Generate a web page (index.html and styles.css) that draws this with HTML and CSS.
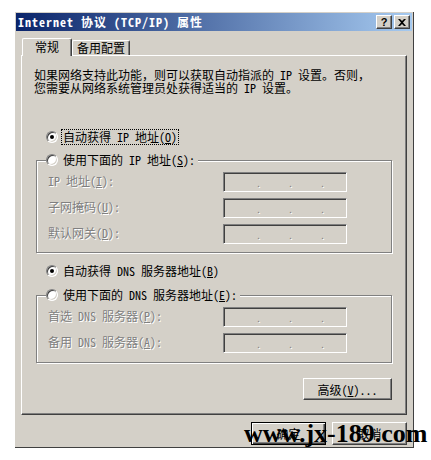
FILE: index.html
```html
<!DOCTYPE html>
<html lang="zh-CN">
<head>
<meta charset="UTF-8">
<title>Internet 协议 (TCP/IP) 属性</title>
<link rel="stylesheet" href="styles.css">
</head>
<body>

<div class="window">
    <div class="titlebar">
        <span class="title">Internet 协议 (TCP/IP) 属性</span>
        <div class="caption-btns">
            <span class="cbtn">?</span>
            <span class="cbtn">
                <svg width="8" height="7" viewBox="0 0 8 7"><path d="M0 0h2l2 2 2-2h2L5 3.5 8 7H6L4 5 2 7H0l3-3.5z" fill="#000"/></svg>
            </span>
        </div>
    </div>

    <div class="body">
        <div class="tabs">
            <div class="tab active">常规</div>
            <div class="tab">备用配置</div>
        </div>

        <div class="panel">
            <p class="intro">如果网络支持此功能，则可以获取自动指派的 IP 设置。否则，<br>您需要从网络系统管理员处获得适当的 IP 设置。</p>

            <div class="radio-row first">
                <span class="radio on"></span>
                <span class="rlabel focus">自动获得 IP 地址(<u>O</u>)</span>
            </div>

            <fieldset class="group g1">
                <legend>
                    <span class="radio"></span>
                    <span class="rlabel">使用下面的 IP 地址(<u>S</u>):</span>
                </legend>
                <div class="fields">
                    <span class="dlabel">IP 地址(<u>I</u>):</span>
                    <div class="ip"><span class="seg"></span><span class="dot">.</span><span class="seg"></span><span class="dot">.</span><span class="seg"></span><span class="dot">.</span></div>
                    <span class="dlabel">子网掩码(<u>U</u>):</span>
                    <div class="ip"><span class="seg"></span><span class="dot">.</span><span class="seg"></span><span class="dot">.</span><span class="seg"></span><span class="dot">.</span></div>
                    <span class="dlabel">默认网关(<u>D</u>):</span>
                    <div class="ip"><span class="seg"></span><span class="dot">.</span><span class="seg"></span><span class="dot">.</span><span class="seg"></span><span class="dot">.</span></div>
                </div>
            </fieldset>

            <div class="radio-row dns">
                <span class="radio on"></span>
                <span class="rlabel">自动获得 DNS 服务器地址(<u>B</u>)</span>
            </div>

            <fieldset class="group g2">
                <legend>
                    <span class="radio"></span>
                    <span class="rlabel">使用下面的 DNS 服务器地址(<u>E</u>):</span>
                </legend>
                <div class="fields">
                    <span class="dlabel">首选 DNS 服务器(<u>P</u>):</span>
                    <div class="ip"><span class="seg"></span><span class="dot">.</span><span class="seg"></span><span class="dot">.</span><span class="seg"></span><span class="dot">.</span></div>
                    <span class="dlabel">备用 DNS 服务器(<u>A</u>):</span>
                    <div class="ip"><span class="seg"></span><span class="dot">.</span><span class="seg"></span><span class="dot">.</span><span class="seg"></span><span class="dot">.</span></div>
                </div>
            </fieldset>

            <div class="adv-row">
                <button type="button" class="btn adv">高级(<u>V</u>)...</button>
            </div>
        </div>

        <div class="footer">
            <button type="button" class="btn default">确定</button>
            <button type="button" class="btn">取消</button>
        </div>
    </div>
</div>

<div class="watermark">www.jx-189.com</div>

</body>
</html>
```

FILE: styles.css
```css
body {
    margin: 0;
    background: #fff;
    font-family: "Noto Sans Mono CJK SC", "Noto Sans CJK SC", sans-serif;
    font-size: 12px;
    color: #000;
}
.window {
    box-sizing: border-box;
    width: 399px;
    height: 436px;
    margin: 12px 0 0 15px;
    padding: 1px;
    background: #d4d0c8;
    border-right: 1px solid #404040;
    border-bottom: 1px solid #404040;
}
.titlebar {
    display: flex;
    align-items: center;
    justify-content: space-between;
    height: 18px;
    padding: 0 2px;
    background: linear-gradient(to right, #0a246a, #a6caf0);
}
.title {
    color: #fff;
    font-weight: bold;
    letter-spacing: 1px;
    line-height: 18px;
    white-space: nowrap;
}
.caption-btns {
    display: flex;
    gap: 2px;
}
.cbtn {
    box-sizing: border-box;
    display: flex;
    align-items: center;
    justify-content: center;
    width: 16px;
    height: 14px;
    background: #d4d0c8;
    border: 1px solid;
    border-color: #fff #404040 #404040 #fff;
    box-shadow: inset -1px -1px 0 #808080;
    font-family: "Liberation Sans", sans-serif;
    font-weight: bold;
    font-size: 11px;
    line-height: 12px;
}
.body {
    padding: 7px 0 0 5px;
}
.tabs {
    display: flex;
    align-items: flex-end;
    height: 17px;
}
.tab {
    box-sizing: border-box;
    height: 15px;
    width: 58px;
    text-align: center;
    line-height: 14px;
    border: 1px solid;
    border-bottom: none;
    border-color: #fff #404040 #fff #fff;
    border-radius: 2px 2px 0 0;
    box-shadow: inset -1px 0 0 #808080;
    background: #d4d0c8;
}
.tab.active {
    position: relative;
    z-index: 1;
    width: 50px;
    height: 18px;
    margin: 0 0 -1px 1px;
    line-height: 16px;
}
.panel {
    box-sizing: border-box;
    width: 386px;
    height: 360px;
    padding: 12px 14px 0 12px;
    border: 1px solid;
    border-color: #fff #404040 #404040 #fff;
    box-shadow: inset -1px -1px 0 #808080;
}
.intro {
    margin: 0;
    line-height: 13px;
    white-space: nowrap;
}
.radio-row {
    display: flex;
    align-items: center;
    height: 16px;
    margin-left: 12px;
}
.radio-row.first {
    margin-top: 35px;
}
.radio-row.dns {
    margin-top: 10px;
}
.radio {
    box-sizing: border-box;
    position: relative;
    flex: none;
    width: 12px;
    height: 12px;
    border-radius: 50%;
    border: 1px solid;
    border-color: #808080 #fff #fff #808080;
    background: #fff;
    box-shadow: inset 1px 1px 0 #404040, inset -1px -1px 0 #d4d0c8;
}
.radio.on::after {
    content: "";
    position: absolute;
    left: 3px;
    top: 3px;
    width: 4px;
    height: 4px;
    border-radius: 50%;
    background: #000;
}
.rlabel {
    margin-left: 3px;
    padding: 0 1px;
    line-height: 14px;
    border: 1px solid transparent;
    white-space: nowrap;
}
.rlabel.focus {
    border: 1px dotted #000;
}
.group {
    box-sizing: border-box;
    width: 356px;
    margin: 7px 0 0 2px;
    padding: 4px 0 8px 11px;
    border: 1px solid #808080;
    box-shadow: 1px 1px 0 #fff, inset 1px 1px 0 #fff;
    min-width: 0;
}
.group.g2 {
    margin-top: 8px;
    padding-top: 4px;
    padding-bottom: 9px;
}
.group legend {
    display: flex;
    align-items: center;
    height: 16px;
    margin-left: -2px;
    padding: 0 2px 0 0;
    background: #d4d0c8;
}
.group legend .rlabel {
    padding: 0;
    margin-left: 4px;
}
.fields {
    display: grid;
    grid-template-columns: 175px 124px;
    row-gap: 6px;
    align-items: center;
}
.dlabel {
    margin-top: -3px;
    color: #808080;
    text-shadow: 1px 1px 0 #fff;
    white-space: nowrap;
}
.ip {
    box-sizing: border-box;
    display: flex;
    align-items: flex-end;
    height: 20px;
    padding-bottom: 2px;
    border: 1px solid;
    border-color: #808080 #fff #fff #808080;
    box-shadow: inset 1px 1px 0 #404040, inset -1px -1px 0 #d4d0c8;
    color: #808080;
    text-shadow: 1px 1px 0 #fff;
    font-size: 10px;
    line-height: 12px;
}
.seg {
    width: 32px;
}
.dot {
    width: 0;
    overflow: visible;
}
.adv-row {
    display: flex;
    justify-content: flex-end;
    margin-top: 15px;
}
.btn {
    box-sizing: border-box;
    width: 75px;
    height: 23px;
    padding: 0;
    background: #d4d0c8;
    border: 1px solid;
    border-color: #fff #404040 #404040 #fff;
    box-shadow: inset -1px -1px 0 #808080;
    font-family: inherit;
    font-size: 12px;
    color: #000;
}
.btn.adv {
    width: 89px;
    height: 22px;
}
.btn.default {
    border: 1px solid #000;
    box-shadow: inset 1px 1px 0 #fff, inset -1px -1px 0 #404040, inset -2px -2px 0 #808080;
}
.footer {
    display: flex;
    justify-content: flex-end;
    gap: 6px;
    width: 386px;
    margin-top: 7px;
}
.watermark {
    position: absolute;
    left: 244px;
    top: 421px;
    font-family: "Liberation Serif", serif;
    font-weight: bold;
    font-size: 26px;
    line-height: 26px;
    letter-spacing: 0;
    color: #000;
    white-space: nowrap;
}
```
